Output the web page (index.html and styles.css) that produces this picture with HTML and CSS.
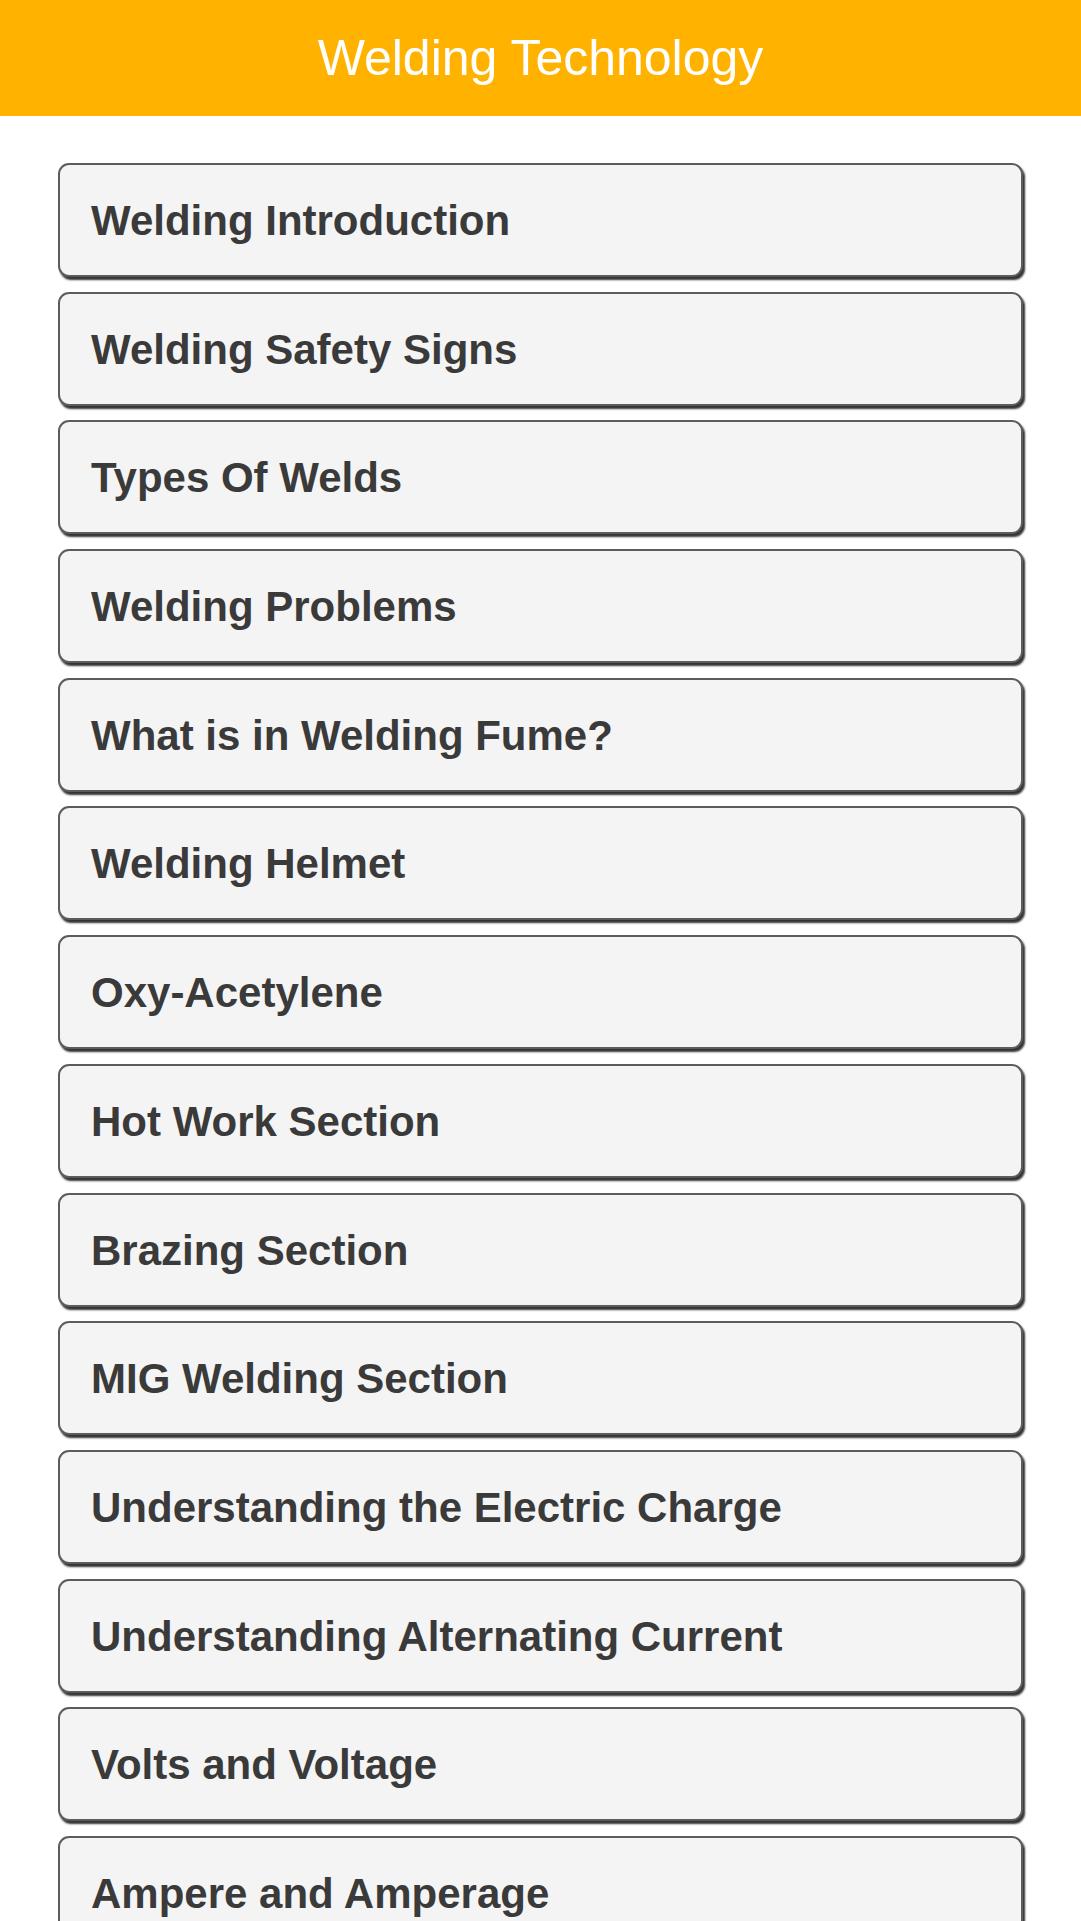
FILE: index.html
```html
<!DOCTYPE html>
<html lang="en">
<head>
    <meta charset="UTF-8">
    <meta name="viewport" content="width=device-width, initial-scale=1.0">
    <title>Welding Technology</title>
    <link rel="stylesheet" href="styles.css">
</head>
<body>
    <header class="top-bar">
        <h1>Welding Technology</h1>
    </header>
    <div class="menu">
        <a class="menu-item" href="#">Welding Introduction</a>
        <a class="menu-item" href="#">Welding Safety Signs</a>
        <a class="menu-item" href="#">Types Of Welds</a>
        <a class="menu-item" href="#">Welding Problems</a>
        <a class="menu-item" href="#">What is in Welding Fume?</a>
        <a class="menu-item" href="#">Welding Helmet</a>
        <a class="menu-item" href="#">Oxy-Acetylene</a>
        <a class="menu-item" href="#">Hot Work Section</a>
        <a class="menu-item" href="#">Brazing Section</a>
        <a class="menu-item" href="#">MIG Welding Section</a>
        <a class="menu-item" href="#">Understanding the Electric Charge</a>
        <a class="menu-item" href="#">Understanding Alternating Current</a>
        <a class="menu-item" href="#">Volts and Voltage</a>
        <a class="menu-item" href="#">Ampere and Amperage</a>
    </div>
</body>
</html>
```

FILE: styles.css
```css
body {
    margin: 0;
    font-family: "Liberation Sans", Arial, sans-serif;
    background-color: #fff;
}

.top-bar {
    height: 116px;
    background-color: #ffb300;
    display: flex;
    align-items: center;
    justify-content: center;
}

.top-bar h1 {
    margin: 0;
    color: #fff;
    font-size: 50px;
    font-weight: normal;
}

.menu {
    display: flex;
    flex-direction: column;
    gap: 14.7px;
    padding: 47px 58px 0;
}

.menu-item {
    display: flex;
    align-items: center;
    height: 114px;
    box-sizing: border-box;
    padding: 2px 0 0 31px;
    background-color: #f4f4f4;
    border: 2px solid #5c5c5c;
    border-radius: 11px;
    box-shadow: 2px 3px 2px rgba(0, 0, 0, 0.8);
    color: #3a3a3a;
    font-size: 42px;
    font-weight: bold;
    text-decoration: none;
}
```
